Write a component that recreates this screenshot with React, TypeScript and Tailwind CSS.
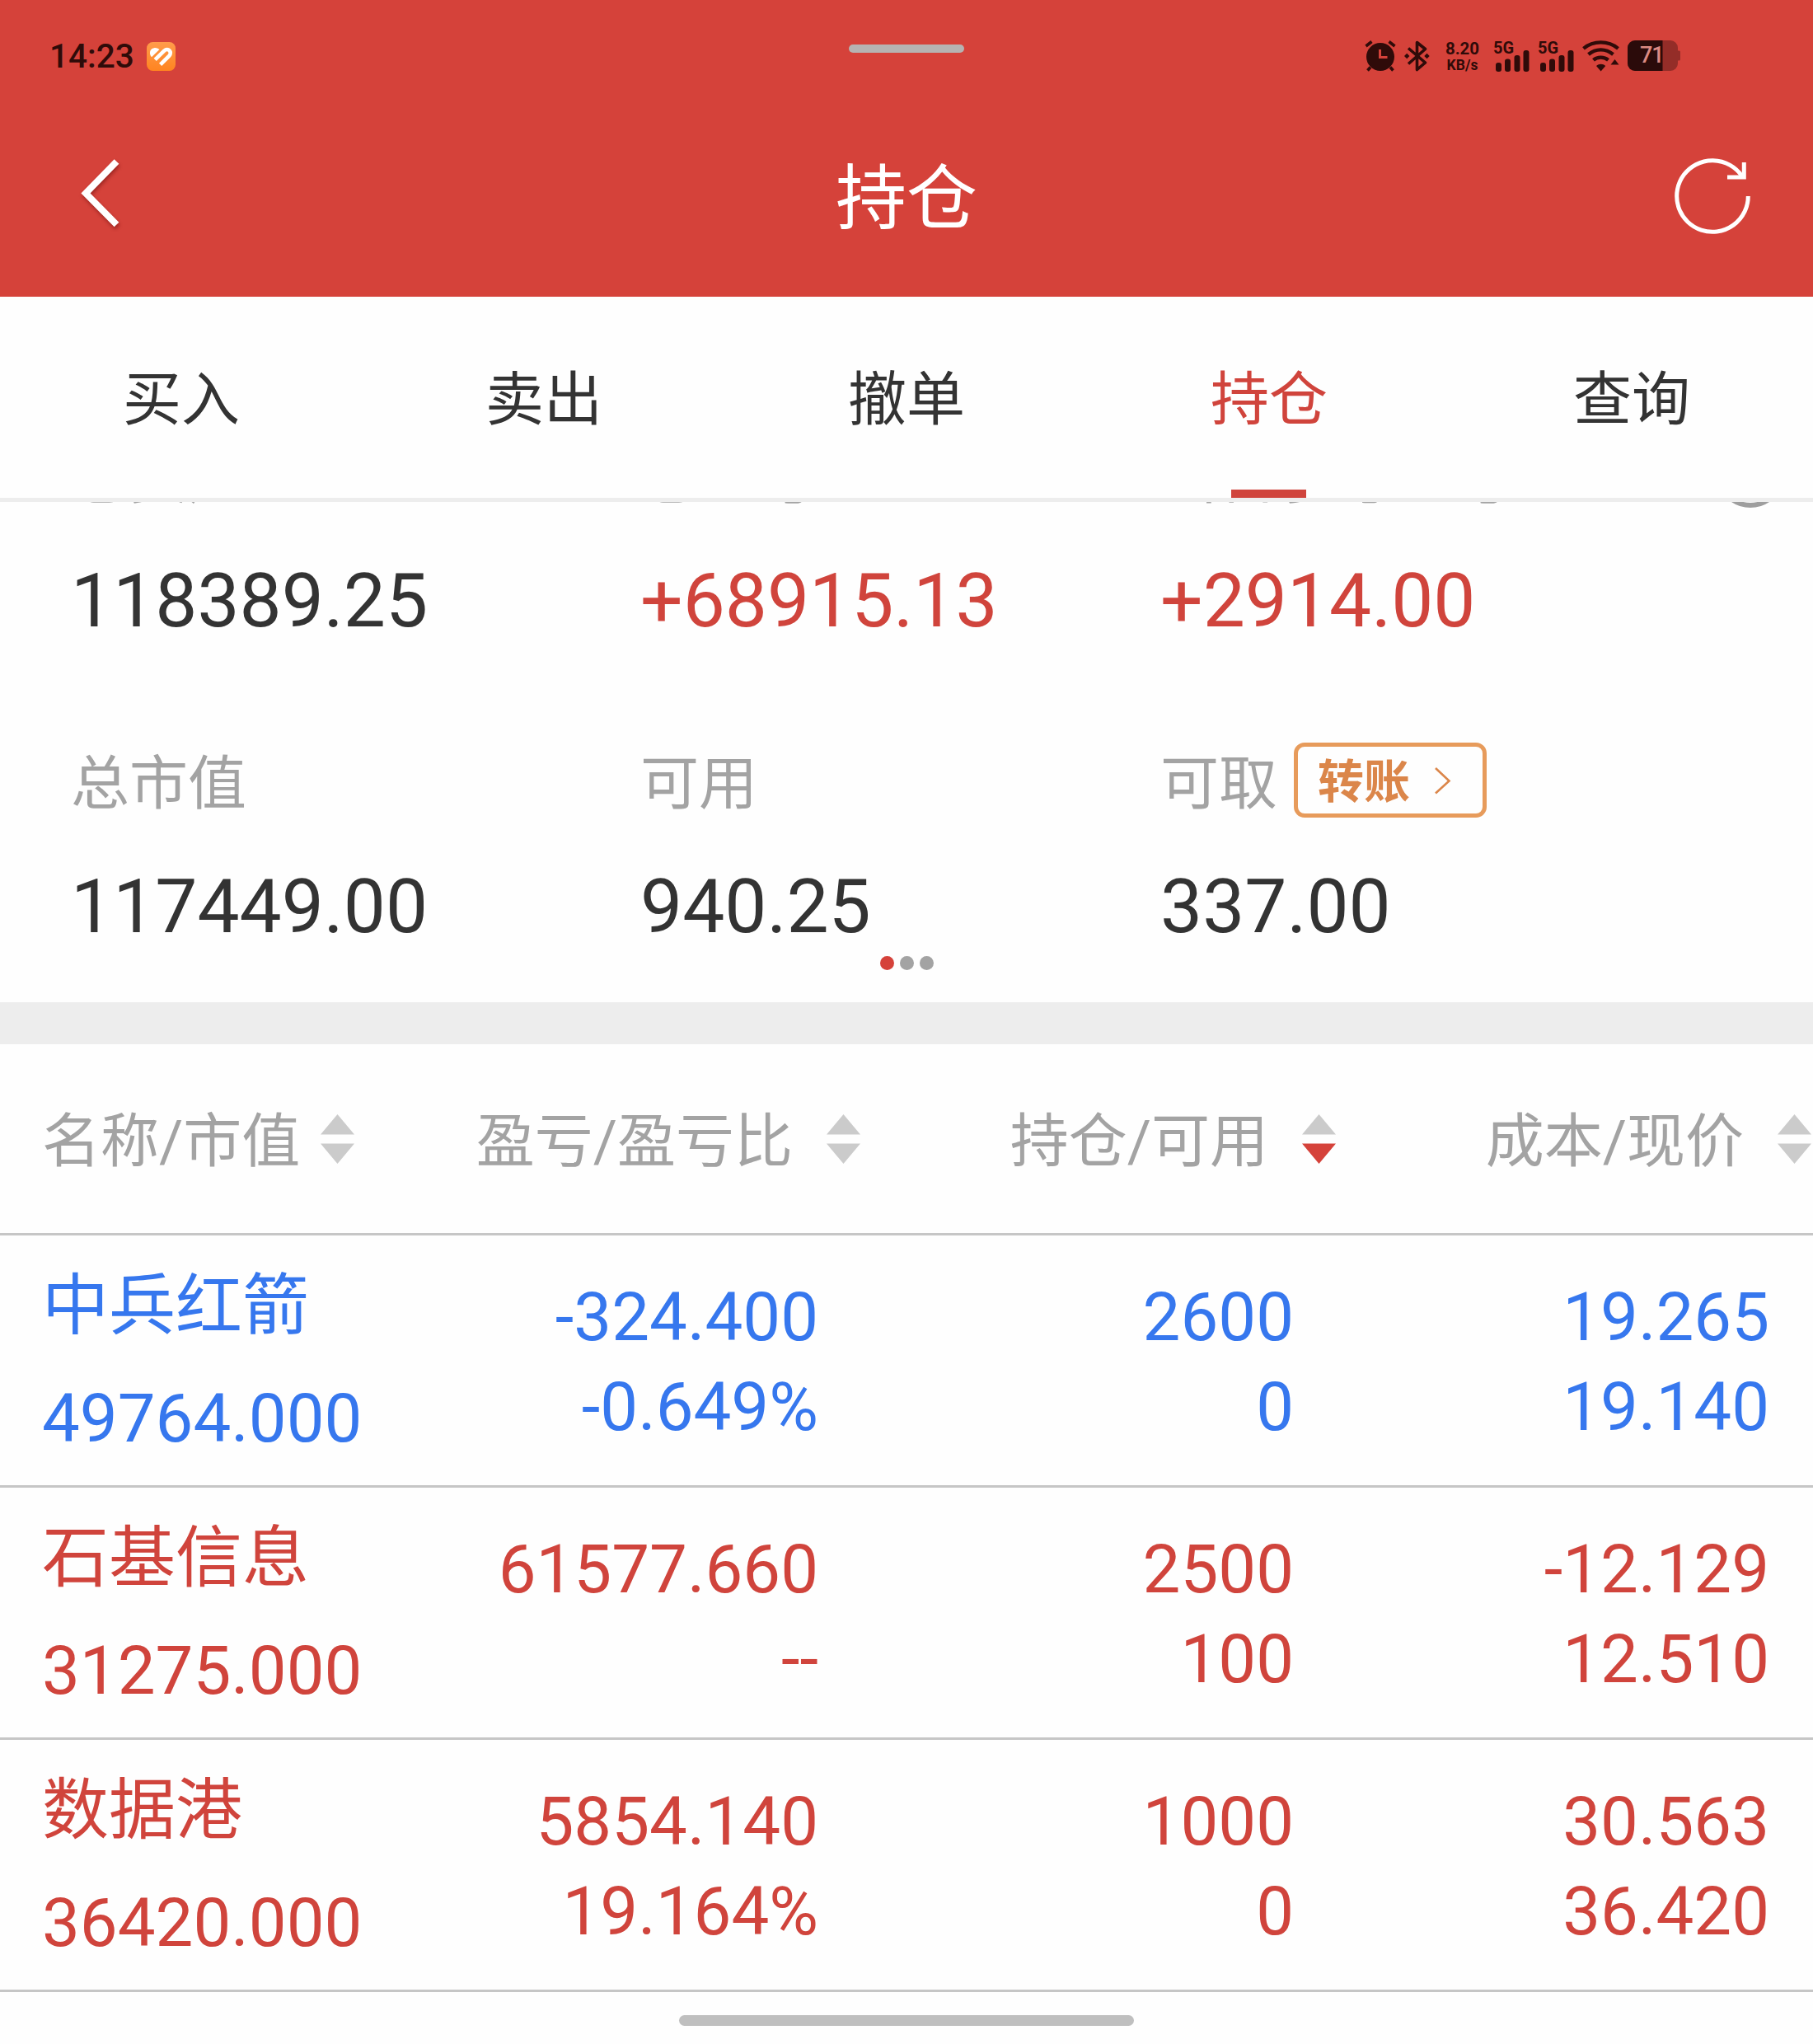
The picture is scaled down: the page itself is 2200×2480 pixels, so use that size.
import { clsx } from "clsx";

const tabs = ["买入", "卖出", "撤单", "持仓", "查询"];

const summary = [
  [
    { label: "总资产", value: "118389.25" },
    { label: "总盈亏", value: "+68915.13", up: true },
    { label: "当日参考盈亏", value: "+2914.00", up: true },
  ],
  [
    { label: "总市值", value: "117449.00" },
    { label: "可用", value: "940.25" },
    { label: "可取", value: "337.00", transfer: true },
  ],
];

const columns = [
  { title: "名称/市值" },
  { title: "盈亏/盈亏比" },
  { title: "持仓/可用", sorted: true },
  { title: "成本/现价" },
];

const holdings = [
  {
    name: "中兵红箭",
    marketValue: "49764.000",
    up: false,
    cells: [
      ["-324.400", "-0.649%"],
      ["2600", "0"],
      ["19.265", "19.140"],
    ],
  },
  {
    name: "石基信息",
    marketValue: "31275.000",
    up: true,
    cells: [
      ["61577.660", "--"],
      ["2500", "100"],
      ["-12.129", "12.510"],
    ],
  },
  {
    name: "数据港",
    marketValue: "36420.000",
    up: true,
    cells: [
      ["5854.140", "19.164%"],
      ["1000", "0"],
      ["30.563", "36.420"],
    ],
  },
];

const AlarmIcon = () => (
  <svg width="38" height="38" viewBox="0 0 38 38" fill="none" stroke="currentColor">
    <circle cx="19" cy="20" r="17" fill="currentColor" stroke="none" />
    <path d="M1.500 7 8.500 1.500M36.500 7 29.500 1.500" strokeWidth="3.6" />
    <path d="M7 32.500 3.500 36.500M31 32.500 34.500 36.500" strokeWidth="3.6" />
    <path d="M18.500 11V20.500H27.500" stroke="#d5423a" strokeWidth="3" />
  </svg>
);

const BluetoothIcon = () => (
  <svg width="31" height="38" viewBox="0 0 31 38" fill="none" stroke="currentColor">
    <path d="M5 9.500 25.500 27 15.500 35.500V2.500L25.500 10.500 5 28.500" strokeWidth="3.6" strokeLinejoin="round" />
    <path d="M3.200 15.800 6.400 19 3.200 22.200 0 19ZM27.500 15.800 30.700 19 27.500 22.200 24.300 19Z" fill="currentColor" stroke="none" />
  </svg>
);

const Signal = () => (
  <div className="relative h-[38px] w-[44px]">
    <span className="absolute top-0 left-0 text-[20px] leading-[18px] font-bold">5G</span>
    <svg className="absolute inset-0" width="44" height="38" viewBox="0 0 44 38" fill="currentColor">
      <rect x="3" y="27" width="7" height="11" rx="3" />
      <rect x="14" y="22.500" width="7" height="15.500" rx="3" />
      <rect x="25.500" y="18" width="7" height="20" rx="3" />
      <rect x="36.500" y="12" width="7" height="26" rx="3" />
    </svg>
  </div>
);

const WifiIcon = () => (
  <svg width="46" height="38" viewBox="0 0 46 38" fill="none" stroke="currentColor" strokeWidth="4.300">
    <path d="M1.500 9.800C13.500 0 31.500 0 43.500 9.800" />
    <path d="M7.500 17C16.500 9.500 28.500 9.500 37.500 17" />
    <path d="M13.500 23.800C18.500 19.500 26.500 19.500 31.500 23.800" />
    <path d="M17 31C20.500 28 25 28 28.200 31L22.600 37.500ZM39.500 23 44.500 29.500H34.500Z" fill="currentColor" stroke="none" />
  </svg>
);

const Battery = () => (
  <div className="relative h-[37px] w-[64px]">
    <svg width="64" height="37" viewBox="0 0 64 37">
      <path d="M9 0H52A9 9 0 0 1 61 9V12.500H62.500A1.500 1.500 0 0 1 64 14V23A1.500 1.500 0 0 1 62.500 24.500H61V28A9 9 0 0 1 52 37H9A9 9 0 0 1 0 28V9A9 9 0 0 1 9 0Z" fill="#942d28" />
      <path d="M9 0H42.500V37H9A9 9 0 0 1 0 28V9A9 9 0 0 1 9 0Z" fill="#2b0b0a" />
    </svg>
    <span className="absolute top-0 left-[15px] text-[27px] leading-[36px] font-medium tracking-[-1px] text-[#dc8a83]">71</span>
  </div>
);

const StatusBar = () => (
  <div className="relative flex h-[135px] items-center justify-between pr-[161px] pl-[60px] text-[#2f0b09]">
    <div className="flex items-center">
      <span className="w-[118px] text-[40.5px] leading-[40px] font-medium">14:23</span>
      <svg width="35" height="35" viewBox="0 0 35 35" className="mt-[2px]">
        <defs>
          <linearGradient id="badge" x1="0" y1="0" x2="0" y2="1">
            <stop offset="0" stopColor="#ff9c4b" />
            <stop offset="1" stopColor="#ff8420" />
          </linearGradient>
        </defs>
        <rect width="35" height="35" rx="7.500" fill="url(#badge)" />
        <path d="M6 18.200C2.500 14.500 3.500 8 9 7.200C11.500 6.800 13.500 7.700 15.500 9Z" fill="#fff" />
        <path d="M10.200 21.300 21.200 10.600C26 6.300 31.500 12 27.400 16.600L16.600 27.400" fill="none" stroke="#fff" strokeWidth="4.600" />
      </svg>
    </div>
    <div className="absolute top-[54px] left-[1030px] h-[10px] w-[140px] rounded-full bg-[#b6b3b2]" />
    <div className="flex items-center">
      <AlarmIcon />
      <div className="ml-[10px]">
        <BluetoothIcon />
      </div>
      <div className="mt-[2px] mr-[1px] ml-[18px] flex w-[43px] flex-col items-center font-bold">
        <span className="text-[20.5px] leading-[20px]">8.20</span>
        <span className="text-[17.5px] leading-[20px]">KB/s</span>
      </div>
      <div className="ml-[15px]">
        <Signal />
      </div>
      <div className="ml-[10px]">
        <Signal />
      </div>
      <div className="ml-[10px]">
        <WifiIcon />
      </div>
      <div className="ml-[9px]">
        <Battery />
      </div>
    </div>
  </div>
);

const Header = () => (
  <header className="h-[360px] bg-[#d5423a]">
    <StatusBar />
    <div className="grid h-[214px] grid-cols-[1fr_auto_1fr] items-center text-white">
      <svg width="56" height="90" viewBox="0 0 56 90" fill="none" className="-mt-[14px] ml-[95px] drop-shadow-[1px_3px_2px_rgba(80,0,0,0.4)]">
        <path d="M46.500 6 9 44.500 46.500 82.500" stroke="white" strokeWidth="8" />
      </svg>
      <h1 className="text-[86px] leading-[214px] font-normal">持仓</h1>
      <svg width="96" height="96" viewBox="0 0 96 96" fill="none" stroke="white" strokeWidth="5" className="-mt-[8px] mr-[74px] justify-self-end">
        <path d="M91.300 48A43.300 43.300 0 1 1 83.500 23.200" />
        <path d="M86.300 7V25H66" />
      </svg>
    </div>
  </header>
);

const Tabs = () => (
  <nav className="flex h-[249px] border-b-[5px] border-[#ededed]">
    {tabs.map((tab) => (
      <div
        key={tab}
        className={clsx(
          "relative flex flex-1 items-center justify-center pt-[5px] text-[71px] leading-none",
          tab === "持仓" ? "text-[#d0443c]" : "text-[#333]",
        )}
      >
        {tab}
        {tab === "持仓" && <span className="absolute bottom-0 left-[174px] h-[10px] w-[91px] bg-[#d0443c]" />}
      </div>
    ))}
  </nav>
);

const TransferButton = () => (
  <button className="-mt-[7px] ml-[20px] flex h-[91px] w-[234px] items-center rounded-[13px] border-[5px] border-[#e79b5b] pl-[24px] text-[#db864a]">
    <span className="pt-[5px] text-[56px] leading-none font-bold">转账</span>
    <svg width="22" height="36" viewBox="0 0 22 36" fill="none" className="ml-[28px]">
      <path d="M3 3 19.500 18.500 3 33.500" stroke="currentColor" strokeWidth="2.600" />
    </svg>
  </button>
);

const Summary = () => (
  <section className="relative h-[607px] overflow-hidden">
    {/* scrolled up, so the first row of labels sits mostly under the tabs */}
    <div className="-mt-[100px]">
      {summary.map((row, i) => (
        <div key={i} className="grid h-[371px] grid-cols-[691px_631px_1fr] content-start pl-[86px]">
          {row.map((item) => (
            <div key={item.label}>
              <div className="flex h-[140px] items-center text-[71px] leading-none text-[#a3a3a3]">
                {item.label}
                {item.transfer && <TransferButton />}
              </div>
              <div className={clsx("text-[91px] leading-[160px]", item.up ? "text-[#d0443c]" : "text-[#333]")}>
                {item.value}
              </div>
            </div>
          ))}
        </div>
      ))}
    </div>
    <span className="absolute -top-[75px] left-[2083px] size-[82px] rounded-full border-[6px] border-[#9e9e9e]" />
    <div className="absolute inset-x-0 top-[551px] flex justify-center gap-[7px]">
      <span className="size-[17px] rounded-full bg-[#d5423a]" />
      <span className="size-[17px] rounded-full bg-[#a3a3a3]" />
      <span className="size-[17px] rounded-full bg-[#a3a3a3]" />
    </div>
  </section>
);

const SortArrows = ({ active }: { active?: boolean }) => (
  <svg width="41" height="60" viewBox="0 0 41 60" className="-mt-[6px]">
    <path d="M20.500 0 41 24.500H0Z" fill="#cbcbcb" />
    <path d="M20.500 60 0 35.500H41Z" fill={active ? "#d5423a" : "#cbcbcb"} />
  </svg>
);

const Holdings = () => (
  <section>
    <div className="grid h-[232px] grid-cols-[467px_577px_577px_577px] border-b-[3px] border-[#c6c6c6] text-[71px] leading-none text-[#a3a3a3]">
      {columns.map((col, i) => (
        <div
          key={col.title}
          className={clsx("flex items-center pt-[6px] whitespace-nowrap", i === 0 ? "pl-[51px]" : "justify-end gap-[41px]")}
        >
          <span className={clsx(i === 0 && "w-[338px]")}>{col.title}</span>
          <SortArrows active={col.sorted} />
        </div>
      ))}
    </div>
    {holdings.map((row) => (
      <div
        key={row.name}
        className={clsx(
          "grid h-[306px] grid-cols-[467px_577px_577px_577px] border-b-[3px] border-[#c6c6c6] text-[81.6px]",
          row.up ? "text-[#d0443c]" : "text-[#3677ee]",
        )}
      >
        <div className="pt-[17px] pl-[51px] leading-[137px]">
          <div className="text-[81px]">{row.name}</div>
          <div>{row.marketValue}</div>
        </div>
        {row.cells.map(([first, second], i) => (
          <div key={i} className="pt-[45px] pr-[51px] text-right leading-[109px]">
            <div>{first}</div>
            <div>{second}</div>
          </div>
        ))}
      </div>
    ))}
  </section>
);

const App = () => (
  <div
    lang="zh-CN"
    className="relative h-[2480px] w-[2200px] overflow-hidden bg-[#fefefe] font-['Roboto','Noto_Sans_CJK_SC',sans-serif]"
  >
    <Header />
    <Tabs />
    <Summary />
    <div className="h-[51px] bg-[#ededed]" />
    <Holdings />
    <div className="absolute bottom-[22px] left-[824px] h-[13px] w-[552px] rounded-full bg-[#bfbfbf]" />
  </div>
);

export default App;
